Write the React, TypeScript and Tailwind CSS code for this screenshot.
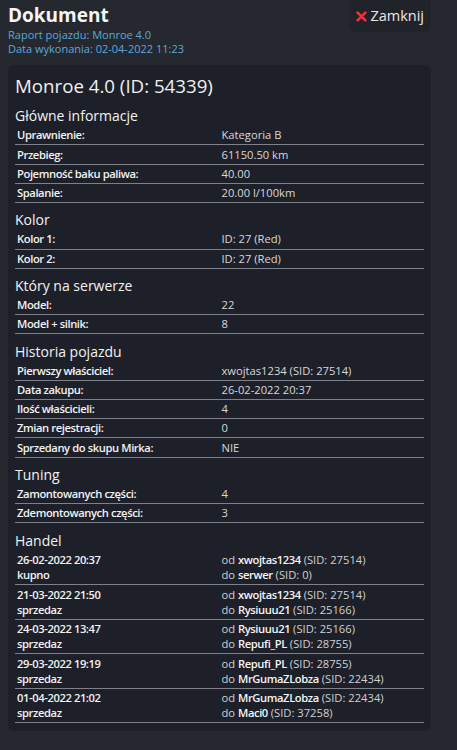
import type { ReactNode } from "react";

type Row = [string, string];

const sections: { title: string; rows: Row[] }[] = [
  {
    title: "Główne informacje",
    rows: [
      ["Uprawnienie:", "Kategoria B"],
      ["Przebieg:", "61150.50 km"],
      ["Pojemność baku paliwa:", "40.00"],
      ["Spalanie:", "20.00 l/100km"],
    ],
  },
  {
    title: "Kolor",
    rows: [
      ["Kolor 1:", "ID: 27 (Red)"],
      ["Kolor 2:", "ID: 27 (Red)"],
    ],
  },
  {
    title: "Który na serwerze",
    rows: [
      ["Model:", "22"],
      ["Model + silnik:", "8"],
    ],
  },
  {
    title: "Historia pojazdu",
    rows: [
      ["Pierwszy właściciel:", "xwojtas1234 (SID: 27514)"],
      ["Data zakupu:", "26-02-2022 20:37"],
      ["Ilość właścicieli:", "4"],
      ["Zmian rejestracji:", "0"],
      ["Sprzedany do skupu Mirka:", "NIE"],
    ],
  },
  {
    title: "Tuning",
    rows: [
      ["Zamontowanych części:", "4"],
      ["Zdemontowanych części:", "3"],
    ],
  },
];

type Party = { name: string; sid: number };

const trades: { date: string; type: string; from: Party; to: Party }[] = [
  {
    date: "26-02-2022 20:37",
    type: "kupno",
    from: { name: "xwojtas1234", sid: 27514 },
    to: { name: "serwer", sid: 0 },
  },
  {
    date: "21-03-2022 21:50",
    type: "sprzedaz",
    from: { name: "xwojtas1234", sid: 27514 },
    to: { name: "Rysiuuu21", sid: 25166 },
  },
  {
    date: "24-03-2022 13:47",
    type: "sprzedaz",
    from: { name: "Rysiuuu21", sid: 25166 },
    to: { name: "Repufi_PL", sid: 28755 },
  },
  {
    date: "29-03-2022 19:19",
    type: "sprzedaz",
    from: { name: "Repufi_PL", sid: 28755 },
    to: { name: "MrGumaZLobza", sid: 22434 },
  },
  {
    date: "01-04-2022 21:02",
    type: "sprzedaz",
    from: { name: "MrGumaZLobza", sid: 22434 },
    to: { name: "Maci0", sid: 37258 },
  },
];

function Heading({ children }: { children: ReactNode }) {
  return (
    <h3 className="pt-[7.3px] text-[14px] leading-[20px] text-[#f2f2f2]">
      {children}
    </h3>
  );
}

function PartyLine({ prefix, party }: { prefix: string; party: Party }) {
  return (
    <div>
      {prefix}{" "}
      <span className="font-semibold tracking-[-0.4px] text-[#f4f4f4]">
        {party.name}
      </span>{" "}
      (SID: {party.sid})
    </div>
  );
}

export default function App() {
  return (
    <div
      className="min-h-[750px] bg-[#262830] px-2 pb-5 text-[#e6e6e6]"
      style={{ fontFamily: '"Open Sans", "Noto Sans", sans-serif' }}
    >
      {/* Header */}
      <div className="flex items-start justify-between">
        <div className="pt-[2px]">
          <h1 className="text-[19px] font-bold leading-[26px] text-[#f5f5f5]">
            Dokument
          </h1>
          <div className="text-[11px] leading-[14px] text-[#5aa8d8]">
            <div>Raport pojazdu: Monroe 4.0</div>
            <div>Data wykonania: 02-04-2022 11:23</div>
          </div>
        </div>
        <button className="mr-[18px] flex h-8 items-center gap-[3px] rounded-b-md bg-[#21232a] px-[7px] text-[14.5px] text-[#e8e8e8]">
          <svg width="11" height="11" viewBox="0 0 10 10">
            <path
              d="M1.5 1.5 L8.5 8.5 M8.5 1.5 L1.5 8.5"
              stroke="#e8353d"
              strokeWidth="2.4"
              strokeLinecap="round"
            />
          </svg>
          Zamknij
        </button>
      </div>

      {/* Report panel */}
      <div className="mr-[18px] mt-[9px] rounded-md bg-[#1e2029] px-[7px] pb-[8px] pt-[8px]">
        <h2 className="text-[18.7px] leading-[26px] text-[#f0f0f0]">
          Monroe 4.0 (ID: 54339)
        </h2>

        {sections.map((s) => (
          <section key={s.title}>
            <Heading>{s.title}</Heading>
            {s.rows.map(([label, value]) => (
              <div
                key={label}
                className="grid h-[19.2px] grid-cols-2 items-center border-b border-[#7e8189] px-[2px] text-[11.2px] leading-[18px]"
              >
                <div className="font-semibold tracking-[-0.4px] text-[#f2f2f2]">
                  {label}
                </div>
                <div className="pl-[2px] text-[#d8d8d8]">{value}</div>
              </div>
            ))}
          </section>
        ))}

        <section>
          <Heading>Handel</Heading>
          {trades.map((t) => (
            <div
              key={t.date}
              className="grid h-[34.5px] grid-cols-2 border-b border-[#7e8189] px-[2px] pt-[1.5px] text-[11.2px] leading-[15px]"
            >
              <div className="font-semibold tracking-[-0.4px] text-[#f2f2f2]">
                <div>{t.date}</div>
                <div>{t.type}</div>
              </div>
              <div className="pl-[2px] text-[#cfd0d3]">
                <PartyLine prefix="od" party={t.from} />
                <PartyLine prefix="do" party={t.to} />
              </div>
            </div>
          ))}
        </section>
      </div>
    </div>
  );
}
